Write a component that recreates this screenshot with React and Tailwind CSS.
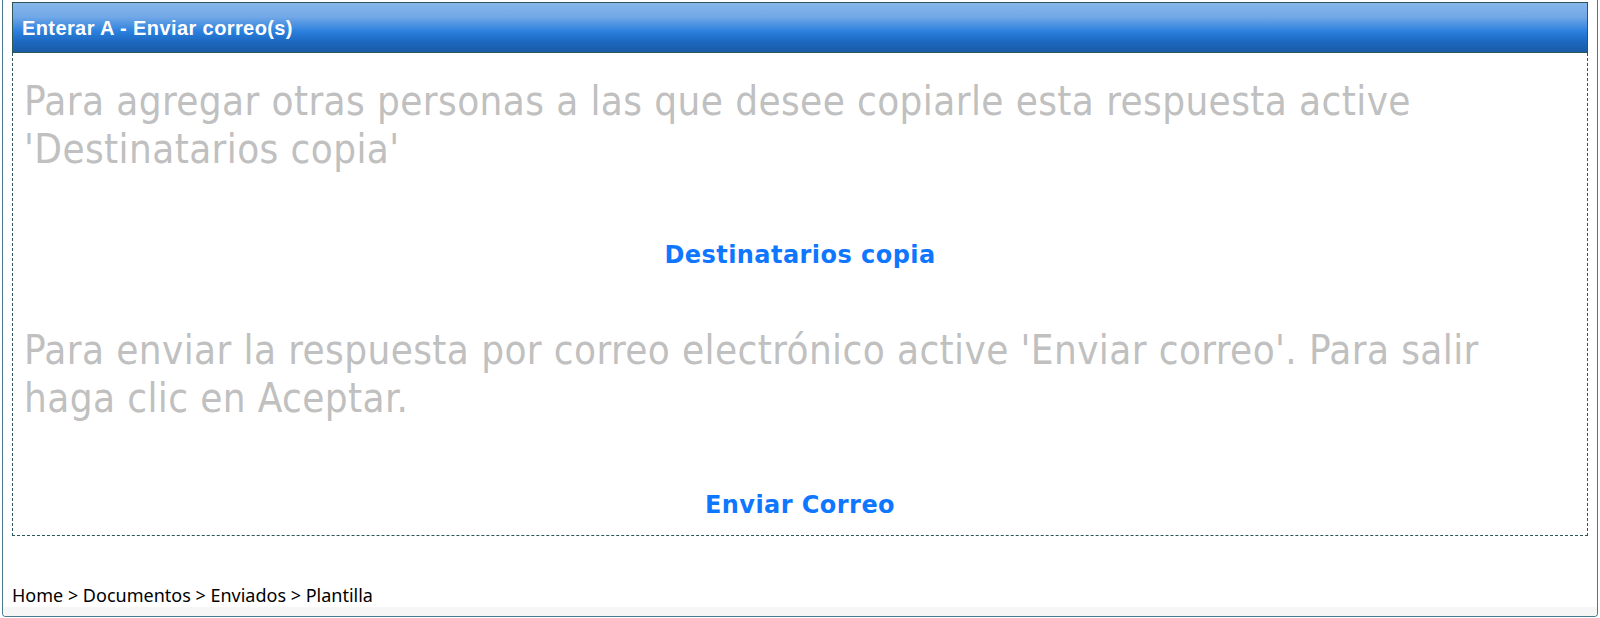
const grayText = "text-[40px] leading-[48px] tracking-[0.4px] text-[#c0c0c0] font-['DejaVu_Sans_Condensed','DejaVu_Sans',sans-serif]";
const linkText = "text-[24px] leading-[28px] font-bold tracking-[0.45px] text-[#0f77ff] text-center font-['DejaVu_Sans',sans-serif]";

const App = () => {
  return (
    <div className="w-[1600px] h-[618px] bg-white overflow-hidden">
      {/* Outer frame, its top lies above the view */}
      <div className="mx-[2px] h-[617px] flex flex-col border-x border-b border-[#4a7a90] rounded-b-[4px] overflow-hidden">
        <div className="px-[9px] pt-[2px] flex flex-col">
          {/* Panel header */}
          <div className="h-[51px] flex items-center pl-[9px] border border-[#2c5658] bg-[linear-gradient(to_bottom,#86b6eb_0%,#72a8e7_28%,#2b80dd_58%,#1d69c2_78%,#1a5ba7_100%)]">
            <span className="text-white font-bold text-[20px] tracking-[0.4px] font-['Liberation_Sans',Arial,sans-serif]">
              Enterar A - Enviar correo(s)
            </span>
          </div>

          {/* Panel body */}
          <div className="flex flex-col px-[11px] pt-[24px] pb-[16px] border-x border-b border-dashed border-[#2c5658]">
            <p className={grayText}>
              Para agregar otras personas a las que desee copiarle esta respuesta active
              <br />
              'Destinatarios copia'
            </p>
            <div className={`${linkText} mt-[68px] cursor-pointer`}>Destinatarios copia</div>
            <p className={`${grayText} mt-[57px]`}>
              Para enviar la respuesta por correo electrónico active 'Enviar correo'. Para salir
              <br />
              haga clic en Aceptar.
            </p>
            <div className={`${linkText} mt-[69px] cursor-pointer`}>Enviar Correo</div>
          </div>
        </div>

        {/* Breadcrumb */}
        <div className="mt-[48px] px-[9px] text-[18px] leading-[22px] text-black font-['Noto_Sans',sans-serif]">
          Home &gt; Documentos &gt; Enviados &gt; Plantilla
        </div>
        <div className="mt-auto h-[9px] bg-[#f6f6f6]"></div>
      </div>
    </div>
  );
};

export default App;
